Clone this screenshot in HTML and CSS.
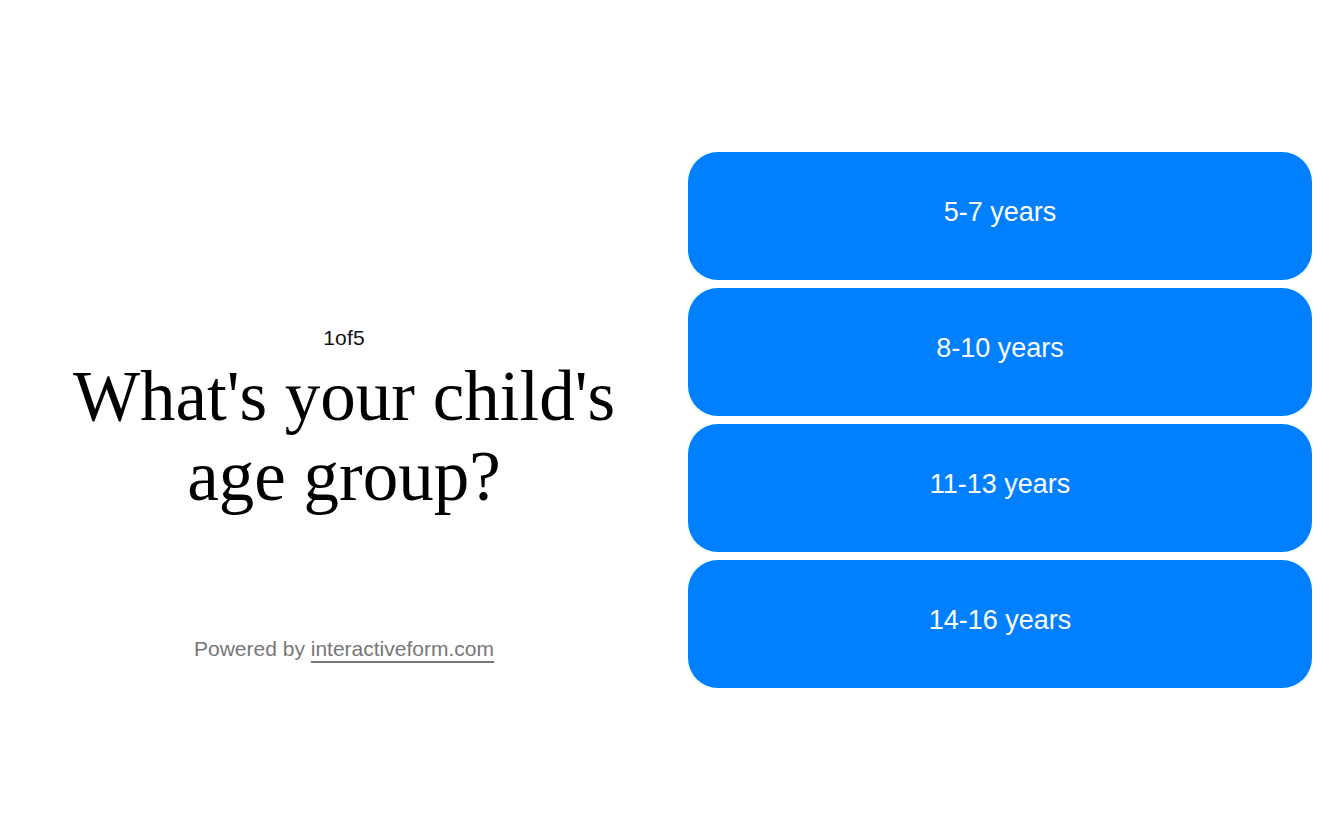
FILE: index.html
```html
<!DOCTYPE html>
<html>
<head>
    <meta charset="UTF-8">
    <meta name="viewport" content="width=device-width, initial-scale=1.0">
    <title>Interactive Form</title>
    <link rel="stylesheet" href="styles.css">
</head>
<body>
    <div class="form-page">
        <div class="question-side">
            <div class="question">
                <div class="step-count">1of5</div>
                <h1 class="question-title">What's your child's age group?</h1>
            </div>
            <div class="powered">
                Powered by <a href="#" class="powered-link">interactiveform.com</a>
            </div>
        </div>
        <div class="answer-list">
            <button class="answer-btn">5-7 years</button>
            <button class="answer-btn">8-10 years</button>
            <button class="answer-btn">11-13 years</button>
            <button class="answer-btn">14-16 years</button>
        </div>
    </div>
</body>
</html>
```

FILE: styles.css
```css
html, body {
    margin: 0;
    padding: 0;
    background: white;
}
.form-page {
    display: grid;
    grid-template-columns: 1fr 1fr;
    gap: 32px;
    padding: 0 32px;
    height: 840px;
    align-items: center;
    box-sizing: border-box;
}
.question-side {
    display: grid;
    grid-template-rows: 1fr auto 1fr;
    height: 536px;
    text-align: center;
}
.question {
    grid-row: 2;
}
.step-count {
    font-family: "Liberation Sans", Arial, sans-serif;
    font-size: 21px;
    line-height: 20px;
    letter-spacing: 0.01em;
    color: #111;
    padding-top: 4px;
    margin-bottom: 8px;
}
.question-title {
    margin: 0;
    font-family: "Liberation Serif", "Times New Roman", serif;
    font-size: 71px;
    font-weight: normal;
    line-height: 80px;
    color: #000;
}
.powered {
    grid-row: 3;
    padding-top: 121px;
    font-family: "Liberation Sans", Arial, sans-serif;
    font-size: 21px;
    color: #777;
}
.powered-link {
    color: #777;
    text-decoration: none;
    border-bottom: 2px solid #777;
    padding-bottom: 1px;
}
.answer-list {
    display: flex;
    flex-direction: column;
    gap: 8px;
}
.answer-btn {
    height: 128px;
    border: none;
    border-radius: 30px;
    background: #007fff;
    color: white;
    font-family: "Liberation Sans", Arial, sans-serif;
    font-size: 27px;
    padding: 0 0 8px;
    cursor: pointer;
}
```
